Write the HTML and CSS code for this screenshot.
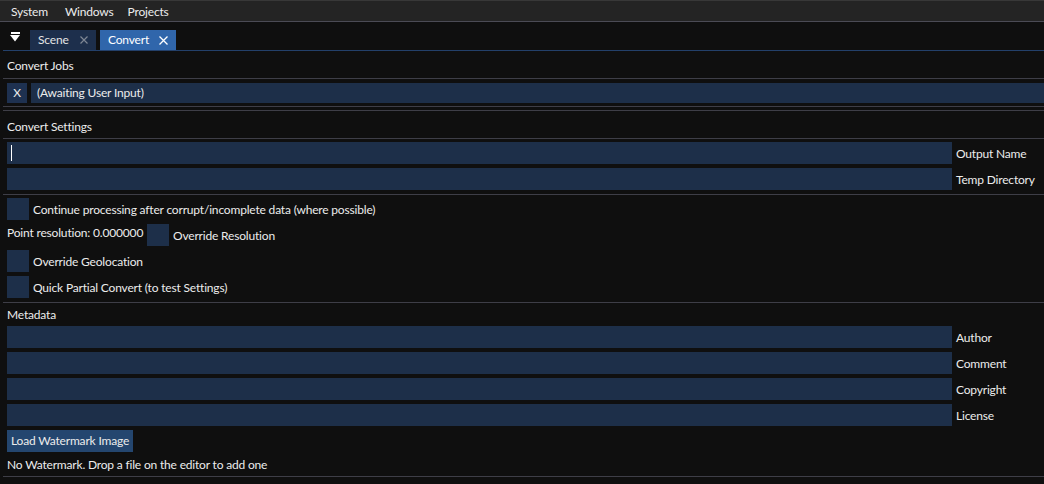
FILE: index.html
```html
<!DOCTYPE html>
<html>
<head>
<meta charset="utf-8">
<link rel="stylesheet" href="styles.css">
</head>
<body>
<div class="menubar">
  <span class="menu-item">System</span>
  <span class="menu-item menu-windows">Windows</span>
  <span class="menu-item">Projects</span>
</div>
<div class="tabbar">
  <svg class="dropdown" width="10" height="10" viewBox="0 0 10 10"><rect x="1" y="0" width="9" height="2" fill="#fff"/><path d="M0 3H10L5 9.5Z" fill="#fff"/></svg>
  <div class="tab tab-scene"><span>Scene</span><svg class="tab-x" width="8" height="8" viewBox="0 0 8 8"><path d="M0.5 0.5L7.5 7.5M7.5 0.5L0.5 7.5" stroke="currentColor" stroke-width="1.2"/></svg></div>
  <div class="tab tab-active"><span>Convert</span><svg class="tab-x" width="9" height="9" viewBox="0 0 9 9"><path d="M0.5 0.5L8.5 8.5M8.5 0.5L0.5 8.5" stroke="currentColor" stroke-width="1.3"/></svg></div>
</div>
<div class="window">
  <div class="header h-jobs">Convert Jobs</div>
  <div class="sep"></div>
  <div class="jobrow">
    <div class="xbtn">X</div>
    <div class="frame job-input">(Awaiting User Input)</div>
  </div>
  <div class="sep sep-gap3"></div>
  <div class="sep sep-gap3"></div>
  <div class="header h-settings">Convert Settings</div>
  <div class="sep"></div>
  <div class="field first"><div class="frame wide"><span class="cursor"></span></div><span class="label">Output Name</span></div>
  <div class="field"><div class="frame wide"></div><span class="label">Temp Directory</span></div>
  <div class="sep sep-gap4"></div>
  <div class="check first"><div class="box"></div><span class="label">Continue processing after corrupt/incomplete data (where possible)</span></div>
  <div class="check res-row"><span class="res-text">Point resolution: 0.000000</span><div class="box"></div><span class="label">Override Resolution</span></div>
  <div class="check"><div class="box"></div><span class="label">Override Geolocation</span></div>
  <div class="check"><div class="box"></div><span class="label">Quick Partial Convert (to test Settings)</span></div>
  <div class="sep sep-gap4"></div>
  <div class="header h-meta">Metadata</div>
  <div class="field meta-first"><div class="frame wide"></div><span class="label">Author</span></div>
  <div class="field"><div class="frame wide"></div><span class="label">Comment</span></div>
  <div class="field"><div class="frame wide"></div><span class="label">Copyright</span></div>
  <div class="field"><div class="frame wide"></div><span class="label">License</span></div>
  <div class="btn">Load Watermark Image</div>
  <div class="note">No Watermark. Drop a file on the editor to add one</div>
  <div class="sep"></div>
</div>
</body>
</html>
```
FILE: styles.css
```css
* { box-sizing: border-box; }
html, body {
  margin: 0;
  background: #0f0f0f;
}
body {
  width: 1044px;
  height: 484px;
  overflow: hidden;
  color: #ececec;
  font-family: Lato, "Noto Sans", sans-serif;
  font-size: 12px;
  letter-spacing: -0.18px;
  white-space: nowrap;
}
.menubar {
  height: 22px;
  background: #242424;
  border-top: 1px solid #383838;
  border-bottom: 1px solid #4b4b55;
  display: flex;
  align-items: center;
  padding-left: 11px;
  padding-top: 2px;
  line-height: 16px;
}
.menu-item { margin-right: 17px; }
.menu-windows { margin-right: 14px; }
.tabbar {
  margin-top: 8px;
  margin-left: 3px;
  height: 21px;
  border-bottom: 1px solid #23406a;
  display: flex;
  align-items: flex-start;
}
.dropdown {
  margin: 2px 0 0 7px;
  flex: none;
}
.tab {
  height: 20px;
  display: flex;
  align-items: center;
  justify-content: space-between;
  padding: 0 8px;
  line-height: 20px;
}
.tab-scene {
  width: 66px;
  margin-left: 10px;
  background: #1d2f4c;
  color: #e4e4e4;
}
.tab-scene .tab-x { color: #7f8794; }
.tab-active {
  width: 76px;
  margin-left: 4px;
  background: #3066ab;
  color: #ffffff;
}
.tab-active .tab-x { color: #ffffff; }
.window {
  padding-left: 7px;
}
.sep {
  height: 1px;
  background: #3e3e47;
  margin-left: -4px;
}
.sep-gap3 { margin-top: 3px; }
.sep-gap4 { margin-top: 4px; }
.header {
  line-height: 16px;
}
.h-jobs { height: 27px; padding-top: 7px; }
.h-settings { height: 27px; padding-top: 8px; }
.h-meta { height: 23px; padding-top: 4px; }
.frame {
  background: #1d2f49;
  height: 100%;
}
.jobrow {
  margin-top: 4px;
  height: 20px;
  display: flex;
  gap: 4px;
}
.xbtn {
  width: 20px;
  background: #1e3150;
  text-align: center;
  line-height: 20px;
}
.job-input {
  flex: 1;
  padding-left: 6px;
  line-height: 20px;
}
.field {
  display: flex;
  height: 22px;
  margin-top: 4px;
  align-items: center;
}
.field.first { margin-top: 3px; }
.field.meta-first { margin-top: 0; }
.wide {
  width: 945px;
  flex: none;
  position: relative;
}
.cursor {
  position: absolute;
  left: 4px;
  top: 3px;
  width: 1px;
  height: 16px;
  background: #ffffff;
}
.label {
  margin-left: 4px;
  line-height: 16px;
  padding-top: 2px;
}
.check {
  display: flex;
  align-items: center;
  height: 22px;
  margin-top: 4px;
}
.check.first { margin-top: 3px; }
.box {
  width: 22px;
  height: 22px;
  background: #1d2f49;
  flex: none;
}
.res-text {
  width: 140px;
  flex: none;
  align-self: flex-start;
  line-height: 16px;
  padding-top: 1px;
}
.btn {
  margin-top: 4px;
  width: 126px;
  height: 22px;
  background: #24466f;
  line-height: 22px;
  padding-left: 4px;
}
.note {
  height: 24px;
  padding-top: 5px;
  line-height: 16px;
}
```
